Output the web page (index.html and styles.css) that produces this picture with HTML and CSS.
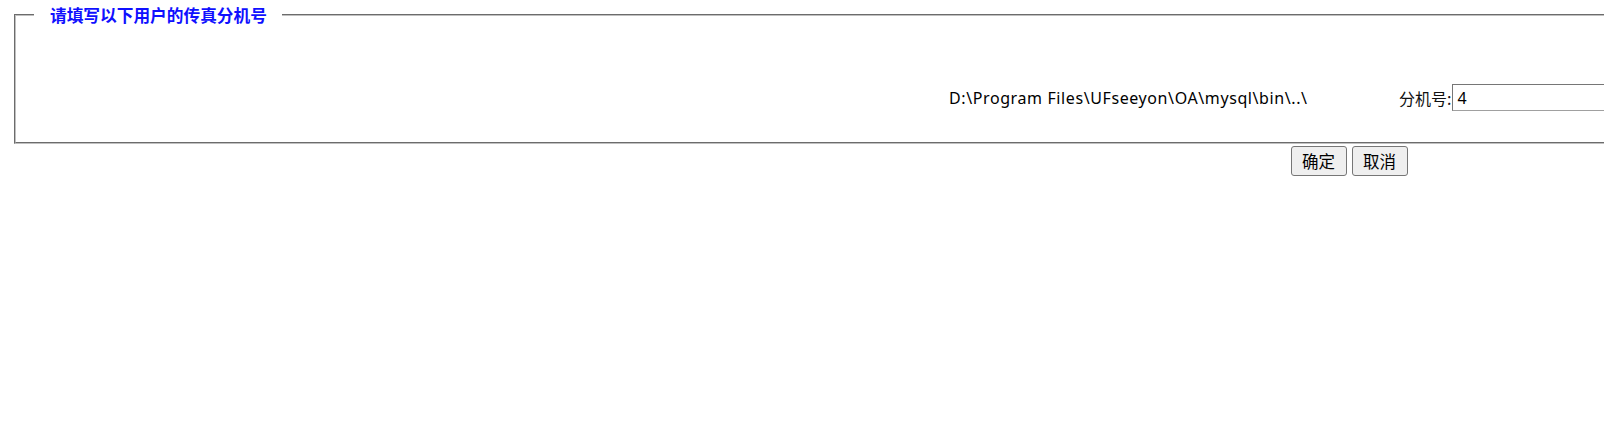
FILE: index.html
```html
<!DOCTYPE html>
<html lang="zh-CN">
<head>
<meta charset="utf-8">
<title>传真分机号</title>
<link rel="stylesheet" href="styles.css">
</head>
<body>
<div class="clip">
  <div class="inner">
    <fieldset class="box">
      <legend class="box-title">请填写以下用户的传真分机号</legend>
      <div class="row">
        <span class="path">D:\Program Files\UFseeyon\OA\mysql\bin\..\</span>
        <label class="ext-label">分机号:<input class="ext-input" type="text" value="4"></label>
      </div>
    </fieldset>
    <div class="actions">
      <button class="btn" type="button">确定</button>
      <button class="btn" type="button">取消</button>
    </div>
  </div>
</div>
</body>
</html>
```

FILE: styles.css
```css
html, body {
  margin: 0;
  padding: 0;
  background: #ffffff;
}

body {
  font-family: "Noto Sans", "Noto Sans CJK SC", sans-serif;
  font-size: 16px;
  color: #000000;
}

.clip {
  width: 1604px;
  overflow: hidden;
  padding-top: 4px;
}

.inner {
  width: 2670px;
  margin-left: 14px;
}

.box {
  margin: 0;
  padding: 0 12px 31px 12px;
  border: 2px groove #c0c0c0;
  min-width: 0;
}

.box-title {
  margin-left: 6px;
  padding: 0 15px 0 16px;
  font-family: "Noto Sans CJK SC", sans-serif;
  font-size: 16.7px;
  font-weight: bold;
  line-height: 22px;
  color: #1010ff;
}

.row {
  display: flex;
  align-items: center;
  height: 27px;
  margin-top: 58px;
  padding-left: 921px;
}

.path {
  width: 360px;
  font-size: 16px;
  letter-spacing: 0.6px;
  line-height: 20px;
  white-space: nowrap;
}

.ext-label {
  display: flex;
  align-items: center;
  margin-left: 90px;
  font-family: "Noto Sans CJK SC", sans-serif;
  font-size: 16px;
  line-height: 20px;
  color: #111111;
  white-space: nowrap;
}

.ext-input {
  box-sizing: border-box;
  width: 320px;
  height: 27px;
  margin: 0 0 0 1px;
  padding: 0 4px;
  border: 1px solid #a0a0a0;
  border-top-color: #767676;
  border-left-color: #767676;
  font-family: "Noto Sans", sans-serif;
  font-size: 16px;
  color: #000000;
  background: #ffffff;
}

.actions {
  display: flex;
  justify-content: center;
  gap: 5px;
  margin-top: 2px;
}

.btn {
  box-sizing: border-box;
  width: 56px;
  height: 30px;
  margin: 0;
  padding: 0;
  border: 1px solid #767676;
  border-radius: 3px;
  background: #efefef;
  font-family: "Noto Sans CJK SC", sans-serif;
  font-size: 16.5px;
  color: #000000;
}
```
